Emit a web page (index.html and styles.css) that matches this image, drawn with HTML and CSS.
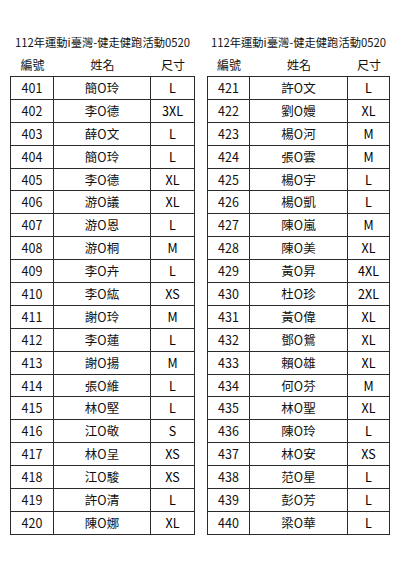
FILE: index.html
```html
<!DOCTYPE html>
<html lang="zh-Hant">
<head>
<meta charset="utf-8">
<title>112年運動i臺灣-健走健跑活動0520</title>
<link rel="stylesheet" href="styles.css">
</head>
<body>
<div class="sheet">
  <section class="block left">
    <div class="title">112年運動i臺灣-健走健跑活動0520</div>
    <div class="head"><div>編號</div><div>姓名</div><div>尺寸</div></div>
    <div class="grid">
      <div class="row"><div>401</div><div>簡O玲</div><div class="sz">L</div></div>
      <div class="row"><div>402</div><div>李O德</div><div class="sz">3XL</div></div>
      <div class="row"><div>403</div><div>薛O文</div><div class="sz">L</div></div>
      <div class="row"><div>404</div><div>簡O玲</div><div class="sz">L</div></div>
      <div class="row"><div>405</div><div>李O德</div><div class="sz">XL</div></div>
      <div class="row"><div>406</div><div>游O議</div><div class="sz">XL</div></div>
      <div class="row"><div>407</div><div>游O恩</div><div class="sz">L</div></div>
      <div class="row"><div>408</div><div>游O桐</div><div class="sz">M</div></div>
      <div class="row"><div>409</div><div>李O卉</div><div class="sz">L</div></div>
      <div class="row"><div>410</div><div>李O紘</div><div class="sz">XS</div></div>
      <div class="row"><div>411</div><div>謝O玲</div><div class="sz">M</div></div>
      <div class="row"><div>412</div><div>李O蓮</div><div class="sz">L</div></div>
      <div class="row"><div>413</div><div>謝O揚</div><div class="sz">M</div></div>
      <div class="row"><div>414</div><div>張O維</div><div class="sz">L</div></div>
      <div class="row"><div>415</div><div>林O堅</div><div class="sz">L</div></div>
      <div class="row"><div>416</div><div>江O敬</div><div class="sz">S</div></div>
      <div class="row"><div>417</div><div>林O呈</div><div class="sz">XS</div></div>
      <div class="row"><div>418</div><div>江O駿</div><div class="sz">XS</div></div>
      <div class="row"><div>419</div><div>許O清</div><div class="sz">L</div></div>
      <div class="row"><div>420</div><div>陳O娜</div><div class="sz">XL</div></div>
    </div>
  </section>
  <section class="block right">
    <div class="title">112年運動i臺灣-健走健跑活動0520</div>
    <div class="head"><div>編號</div><div>姓名</div><div>尺寸</div></div>
    <div class="grid">
      <div class="row"><div>421</div><div>許O文</div><div class="sz">L</div></div>
      <div class="row"><div>422</div><div>劉O嫚</div><div class="sz">XL</div></div>
      <div class="row"><div>423</div><div>楊O河</div><div class="sz">M</div></div>
      <div class="row"><div>424</div><div>張O雲</div><div class="sz">M</div></div>
      <div class="row"><div>425</div><div>楊O宇</div><div class="sz">L</div></div>
      <div class="row"><div>426</div><div>楊O凱</div><div class="sz">L</div></div>
      <div class="row"><div>427</div><div>陳O嵐</div><div class="sz">M</div></div>
      <div class="row"><div>428</div><div>陳O美</div><div class="sz">XL</div></div>
      <div class="row"><div>429</div><div>黃O昇</div><div class="sz">4XL</div></div>
      <div class="row"><div>430</div><div>杜O珍</div><div class="sz">2XL</div></div>
      <div class="row"><div>431</div><div>黃O偉</div><div class="sz">XL</div></div>
      <div class="row"><div>432</div><div>鄧O鴛</div><div class="sz">XL</div></div>
      <div class="row"><div>433</div><div>賴O雄</div><div class="sz">XL</div></div>
      <div class="row"><div>434</div><div>何O芬</div><div class="sz">M</div></div>
      <div class="row"><div>435</div><div>林O聖</div><div class="sz">XL</div></div>
      <div class="row"><div>436</div><div>陳O玲</div><div class="sz">L</div></div>
      <div class="row"><div>437</div><div>林O安</div><div class="sz">XS</div></div>
      <div class="row"><div>438</div><div>范O星</div><div class="sz">L</div></div>
      <div class="row"><div>439</div><div>彭O芳</div><div class="sz">L</div></div>
      <div class="row"><div>440</div><div>梁O華</div><div class="sz">L</div></div>
    </div>
  </section>
</div>
</body>
</html>
```

FILE: styles.css
```css
html, body {
  margin: 0;
  padding: 0;
  background: #ffffff;
}
body {
  font-family: "Noto Sans CJK TC", "Noto Sans", sans-serif;
  color: #111111;
  font-size: 12px;
}
.sheet {
  display: flex;
  gap: 12px;
  padding: 34px 0 0 10px;
}
.block.left {
  width: 185px;
  --cols: 43px 97px 44px;
}
.block.right {
  width: 183px;
  --cols: 42px 98px 42px;
}
.title {
  height: 16px;
  line-height: 16px;
  font-size: 11.3px;
  text-align: center;
  white-space: nowrap;
}
.head {
  display: grid;
  grid-template-columns: var(--cols);
  height: 22px;
  margin-top: 4px;
  padding-left: 1px;
  align-items: center;
  text-align: center;
  line-height: 16px;
}
.grid {
  border-top: 1px solid #2a2a2a;
  border-left: 1px solid #2a2a2a;
}
.row {
  display: grid;
  grid-template-columns: var(--cols);
  height: 22.9px;
}
.row > div {
  box-sizing: border-box;
  border-right: 1px solid #2a2a2a;
  border-bottom: 1px solid #2a2a2a;
  display: flex;
  align-items: center;
  justify-content: center;
  line-height: 14px;
  font-size: 12.5px;
}
.row > .sz {
  color: #000000;
}
```
